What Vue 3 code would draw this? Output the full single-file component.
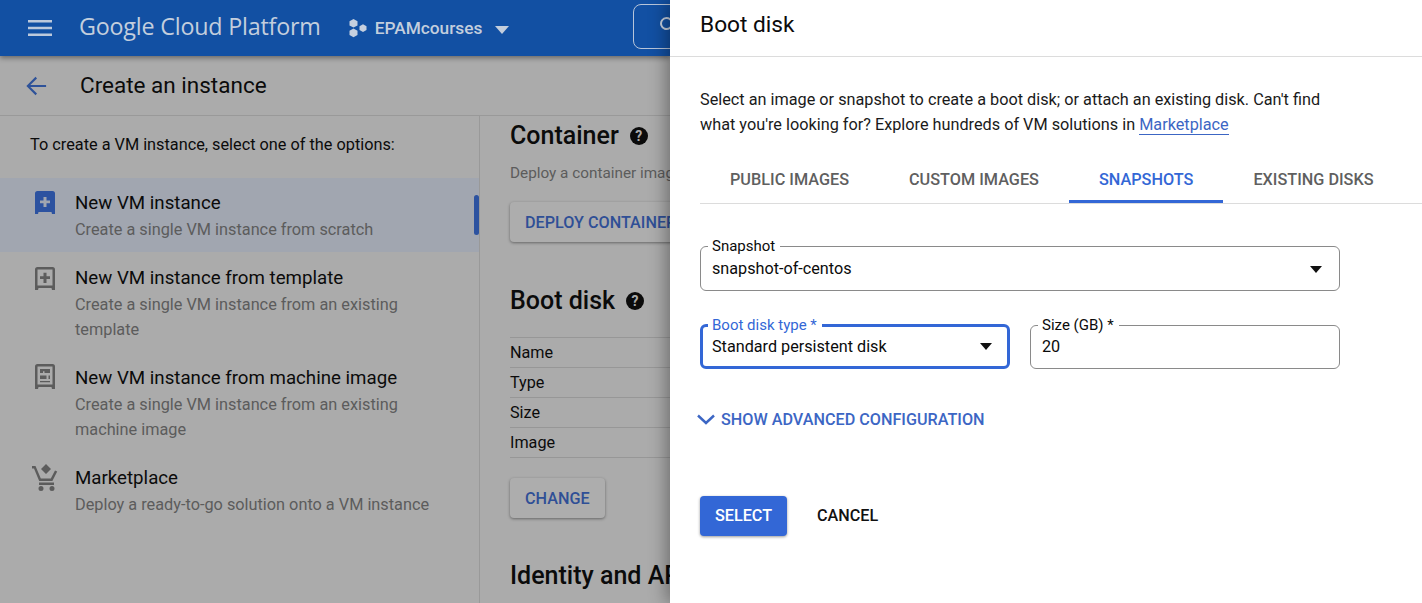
<script setup>
const options = [
  { title: 'New VM instance', text: 'Create a single VM instance from scratch', icon: 'solid', active: true },
  { title: 'New VM instance from template', text: 'Create a single VM instance from an existing template', icon: 'outline', tall: true },
  { title: 'New VM instance from machine image', text: 'Create a single VM instance from an existing machine image', icon: 'image', tall: true },
  { title: 'Marketplace', text: 'Deploy a ready-to-go solution onto a VM instance', icon: 'cart' },
]
const rows = ['Name', 'Type', 'Size', 'Image']
const tabs = ['PUBLIC IMAGES', 'CUSTOM IMAGES', 'SNAPSHOTS', 'EXISTING DISKS']
</script>

<template>
  <div class="page">
    <div class="console">
      <header class="topbar">
        <svg class="menu" width="24" height="24" viewBox="0 0 24 24"><path d="M0 4h24v2.4H0zM0 10.800h24v2.400H0zM0 17.600h24V20H0z" /></svg>
        <span class="brand">Google Cloud Platform</span>
        <svg class="hex" width="20" height="20" viewBox="0 0 20 20">
          <path d="M5.500 1l4 2.200v4.200l-4 2.200-4-2.200V3.200zM5.500 10.600l4 2.200V17l-4 2.200-4-2.200v-4.200zM15 6.300l3.500 2v3.800l-3.500 2-3.500-2V8.300z" />
        </svg>
        <span class="project">EPAMcourses</span>
        <span class="caret"></span>
        <div class="search">
          <svg width="24" height="24" viewBox="0 0 24 24"><path d="M9.500 3a6.500 6.500 0 0 1 5.200 10.400l5.600 5.600-1.500 1.500-5.600-5.600A6.500 6.500 0 1 1 9.500 3zm0 2a4.500 4.500 0 1 0 0 9 4.500 4.500 0 0 0 0-9z" /></svg>
        </div>
      </header>

      <div class="subbar">
        <svg class="back" width="22" height="22" viewBox="0 0 24 24"><path d="M23 11H5.800l7.300-7.300L11.500 2 1.500 12l10 10 1.600-1.700L5.800 13H23z" /></svg>
        <h1>Create an instance</h1>
      </div>

      <div class="columns">
        <aside class="side">
          <p class="intro">To create a VM instance, select one of the options:</p>
          <div v-for="opt in options" :key="opt.title" class="option" :class="{ active: opt.active, tall: opt.tall }">
            <svg v-if="opt.icon === 'solid'" class="opt-icon" width="20" height="24" viewBox="0 0 20 24">
              <path fill-rule="evenodd" d="M2.500 0h15A2.500 2.500 0 0 1 20 2.500V23h-3l-.5-2h-13L3 23H0V2.500A2.500 2.500 0 0 1 2.500 0zm6 6v3.500H5v2.800h3.500V16h3v-3.700H15V9.500h-3.500V6z" />
            </svg>
            <svg v-else-if="opt.icon === 'outline'" class="opt-icon" width="20" height="24" viewBox="0 0 20 24">
              <path fill-rule="evenodd" d="M2.500 0h15A2.500 2.500 0 0 1 20 2.500V23h-3l-.5-2h-13L3 23H0V2.500A2.500 2.500 0 0 1 2.500 0zm0 2.500v16h15v-16zm6 3.200h3v3.500H15v2.800h-3.500V16h-3v-4H5V9.200h3.500z" />
            </svg>
            <svg v-else-if="opt.icon === 'image'" class="opt-icon lifted" width="20" height="25" viewBox="0 0 20 25">
              <path fill-rule="evenodd" d="M2.500 0h15A2.500 2.500 0 0 1 20 2.500V25h-3l-.5-2h-13L3 25H0V2.500A2.500 2.500 0 0 1 2.500 0zm0 2.500v18h15v-18zM5 5h10v4H9.500V7.200H8V9H5zM5 11.500h6.500v3.500H5zM13.500 11.500H15v3.500h-1.500zM5 17h10v1.200H5z" />
            </svg>
            <svg v-else class="opt-icon cart lifted" width="26" height="27" viewBox="0 0 26 27">
              <path d="M14 0l5 5-5 5-5-5zM0 2h3.500l5.300 12.500h10L23 6.500l2.200 1-4.800 9.500H7.200L2 4.500H0zM7 18.500h15V21H7zM9 22a2.500 2.500 0 1 1 0 5 2.500 2.500 0 0 1 0-5zm11 0a2.500 2.500 0 1 1 0 5 2.500 2.500 0 0 1 0-5z" />
            </svg>
            <div class="opt-body">
              <div class="opt-title">{{ opt.title }}</div>
              <div class="opt-text">{{ opt.text }}</div>
            </div>
            <span v-if="opt.active" class="marker"></span>
          </div>
        </aside>

        <main class="form">
          <h2>Container <span class="help">?</span></h2>
          <p class="desc">Deploy a container image to this VM instance</p>
          <button class="raised deploy">DEPLOY CONTAINER</button>

          <h2 class="boot">Boot disk <span class="help">?</span></h2>
          <div class="table">
            <div v-for="row in rows" :key="row" class="row">{{ row }}</div>
          </div>
          <button class="raised change">CHANGE</button>

          <h2 class="identity">Identity and API access</h2>
        </main>
      </div>
    </div>

    <section class="drawer">
      <div class="drawer-head">Boot disk</div>
      <div class="drawer-body">
        <p class="lead">
          Select an image or snapshot to create a boot disk; or attach an existing disk. Can't find
          what you're looking for? Explore hundreds of VM solutions in <a class="link">Marketplace</a>
        </p>

        <nav class="tabs">
          <span v-for="tab in tabs" :key="tab" class="tab" :class="{ on: tab === 'SNAPSHOTS' }">{{ tab }}</span>
        </nav>

        <fieldset class="field full">
          <legend>Snapshot</legend>
          <span>snapshot-of-centos</span>
          <i class="arrow"></i>
        </fieldset>

        <div class="pair">
          <fieldset class="field focused">
            <legend>Boot disk type *</legend>
            <span>Standard persistent disk</span>
            <i class="arrow"></i>
          </fieldset>
          <fieldset class="field">
            <legend>Size (GB) *</legend>
            <span>20</span>
          </fieldset>
        </div>

        <div class="advanced">
          <svg width="18" height="12" viewBox="0 0 18 12"><path d="M1 2.500 9 10l8-7.500" fill="none" stroke="currentColor" stroke-width="2.400" /></svg>
          SHOW ADVANCED CONFIGURATION
        </div>

        <div class="actions">
          <button class="select">SELECT</button>
          <button class="cancel">CANCEL</button>
        </div>
      </div>
    </section>
  </div>
</template>

<style>
html,
body {
  margin: 0;
  overflow: hidden;
}
</style>

<style scoped>
.page {
  display: flex;
  width: 1422px;
  height: 603px;
  overflow: hidden;
  font-family: Roboto, "Liberation Sans", sans-serif;
  color: #0b0b0b;
}

.console {
  width: 670px;
  flex: none;
  height: 603px;
  background: #ababab;
  overflow: hidden;
}

.topbar {
  height: 56px;
  display: flex;
  align-items: center;
  background: #1250a3;
  color: #c3cedd;
  box-shadow: 0 2px 5px rgba(0, 0, 0, 0.4);
  position: relative;
  padding-left: 28px;
  box-sizing: border-box;
}

.menu {
  flex: none;
  fill: #bcc9dc;
}

.brand {
  margin: -4px 0 0 27px;
  flex: none;
  white-space: nowrap;
  font-family: "Open Sans", sans-serif;
  font-size: 23.300px;
  letter-spacing: -0.2px;
}

.hex {
  flex: none;
  margin-left: 27px;
  fill: #c6d0df;
}

.project {
  flex: none;
  margin-left: 7px;
  font-size: 17.300px;
  font-weight: 500;
}

.caret {
  flex: none;
  margin-left: 13px;
  margin-top: 3px;
  border: 7px solid transparent;
  border-top: 8px solid #c3cedd;
  border-bottom: 0;
}

.search {
  margin-left: 124px;
  margin-top: -3px;
  width: 80px;
  height: 45px;
  flex: none;
  box-sizing: border-box;
  border: 1px solid #b7c5da;
  border-radius: 8px;
  padding: 9px 0 0 23px;
}

.search svg {
  fill: #c6d0df;
}

.subbar {
  height: 60px;
  box-sizing: border-box;
  display: flex;
  align-items: center;
  padding-left: 25px;
  border-bottom: 1px solid #999;
}

.back {
  fill: #2e5299;
}

h1 {
  margin: 0 0 2px 33px;
  font-size: 22.500px;
  font-weight: 400;
}

.columns {
  display: flex;
  height: 487px;
}

.side {
  width: 480px;
  flex: none;
  box-sizing: border-box;
  border-right: 1px solid #999;
}

.intro {
  margin: 0;
  padding: 19px 30px 0;
  height: 62px;
  box-sizing: border-box;
  font-size: 16.300px;
  line-height: 20px;
}

.option {
  display: flex;
  gap: 20px;
  padding: 14px 30px 0 35px;
  position: relative;
  box-sizing: border-box;
  height: 75px;
}

.option.tall {
  height: 100px;
}

.option.active {
  background: #a1a6b0;
  height: 74px;
  padding-top: 13px;
}

.opt-icon {
  flex: none;
  fill: #5c5c5c;
  margin-top: 1px;
}

.opt-icon.lifted {
  margin-top: -2px;
}

.cart {
  margin-left: -3px;
  margin-right: -3px;
}

.active .opt-icon {
  fill: #2c52a0;
  margin-top: 0;
}

.opt-title {
  font-size: 18.700px;
  line-height: 25px;
  margin-bottom: 1px;
  white-space: nowrap;
}

.opt-text {
  font-size: 16.300px;
  line-height: 25px;
  color: #5c5c5c;
  width: 360px;
}

.marker {
  position: absolute;
  right: 0;
  top: 17px;
  width: 5px;
  height: 40px;
  border-radius: 3px;
  background: #2c52a0;
}

.form {
  flex: 1;
  min-width: 0;
  padding-left: 30px;
  white-space: nowrap;
}

h2 {
  margin: 0;
  font-size: 25px;
  font-weight: 500;
  line-height: 30px;
  padding-top: 5px;
  display: flex;
  align-items: center;
  gap: 11px;
}

.help {
  width: 18px;
  height: 18px;
  border-radius: 50%;
  background: #0b0b0b;
  color: #ababab;
  font-size: 14px;
  font-weight: 700;
  line-height: 18px;
  text-align: center;
}

.desc {
  margin: 12px 0 0;
  font-size: 15.300px;
  line-height: 20px;
  color: #5c5c5c;
}

.raised {
  display: block;
  height: 40px;
  padding: 0 15px;
  border: 0;
  border-radius: 4px;
  background: #adadad;
  color: #2f4f96;
  font: 500 16.200px Roboto, sans-serif;
  box-shadow: 0 1px 3px rgba(0, 0, 0, 0.4);
}

.deploy {
  margin-top: 19px;
  width: 190px;
  text-align: left;
}

.boot {
  margin-top: 39px;
}

.table {
  margin-top: 21px;
  border-top: 1px solid #979797;
}

.row {
  height: 30px;
  box-sizing: border-box;
  border-bottom: 1px solid #979797;
  font-size: 16.200px;
  line-height: 29px;
}

.change {
  margin-top: 20px;
}

.identity {
  margin-top: 38px;
}

.drawer {
  flex: 1;
  position: relative;
  background: #fff;
  box-shadow: -4px 0 16px rgba(0, 0, 0, 0.35);
}

.drawer-head {
  height: 57px;
  box-sizing: border-box;
  padding: 12px 30px 0;
  border-bottom: 1px solid #dcdcdc;
  font-size: 22.700px;
  line-height: 26px;
}

.drawer-body {
  padding: 30px 0 0 30px;
}

.lead {
  margin: 0;
  width: 640px;
  font-size: 16.250px;
  line-height: 25px;
  color: #1a1a1a;
}

.link {
  color: #3c66c4;
  border-bottom: 1px solid #3c66c4;
}

.tabs {
  display: flex;
  margin-top: 18px;
  border-bottom: 1px solid #dcdcdc;
  height: 49px;
  box-sizing: border-box;
}

.tab {
  padding: 15px 30px 0;
  height: 48px;
  box-sizing: border-box;
  font-size: 16.250px;
  font-weight: 500;
  color: #5f5f5f;
}

.tab.on {
  color: #3367d6;
  border-bottom: 3px solid #3367d6;
}

.field {
  position: relative;
  margin: 0;
  min-width: 0;
  box-sizing: border-box;
  height: 52px;
  padding: 0 11px;
  border: 1px solid #8a8a8a;
  border-radius: 6px;
  font-size: 16.200px;
  display: block;
  line-height: 26px;
}

.field legend {
  margin-left: -4px;
  padding: 0 5px 0 4px;
  font-size: 15px;
  line-height: 16px;
}

.field span {
  display: block;
  padding-top: 2px;
}

.pair .field span {
  padding-top: 1px;
}

.full {
  margin-top: 34px;
  width: 640px;
  height: 53px;
}

.pair {
  display: flex;
  gap: 20px;
  margin-top: 26px;
  width: 640px;
}

.pair .field {
  flex: 1;
}

.focused {
  border: 3px solid #3367d6;
  padding: 0 9px;
}

.focused legend {
  color: #3367d6;
}

.arrow {
  position: absolute;
  right: 17px;
  top: 12px;
  border: 6.500px solid transparent;
  border-top: 7px solid #111;
  border-bottom: 0;
}

.focused .arrow {
  right: 15px;
  top: 10px;
}

.advanced {
  display: flex;
  align-items: center;
  gap: 6px;
  margin-top: 38px;
  margin-left: -3px;
  height: 24px;
  font-size: 16.200px;
  font-weight: 500;
  color: #3c66c4;
}

.actions {
  display: flex;
  gap: 30px;
  margin-top: 65px;
}

.select {
  width: 87px;
  height: 40px;
  border: 0;
  border-radius: 4px;
  padding: 0 0 2px;
  background: #3367d6;
  color: #fff;
  font: 500 16.200px Roboto, sans-serif;
  box-shadow: 0 1px 3px rgba(0, 0, 0, 0.4);
}

.cancel {
  border: 0;
  padding: 0 0 2px;
  background: none;
  color: #111;
  font: 500 16.200px Roboto, sans-serif;
}
</style>
